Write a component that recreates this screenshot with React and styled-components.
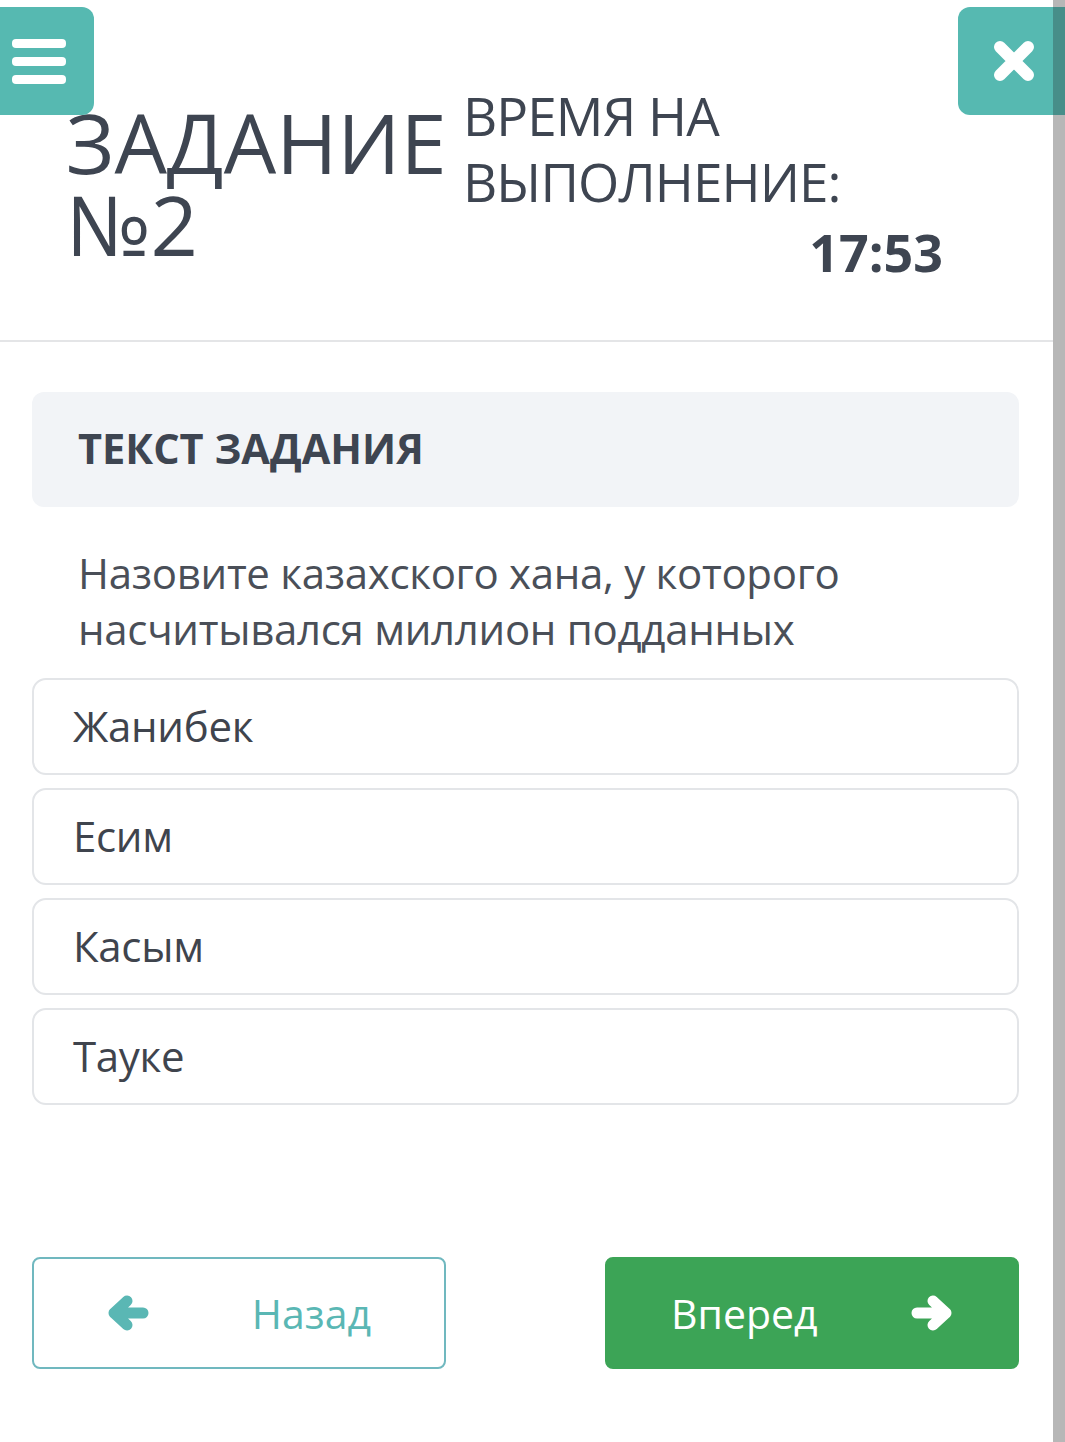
import React from "react";
import styled, { createGlobalStyle } from "styled-components";

const GlobalStyle = createGlobalStyle`
  html, body {
    margin: 0;
    padding: 0;
    background: #ffffff;
  }
  body {
    font-family: "Open Sans", "Liberation Sans", sans-serif;
    color: #3e4551;
  }
`;

const Page = styled.div`
  position: relative;
  display: flex;
  width: 1065px;
  min-height: 1442px;
  overflow: hidden;
`;

const Main = styled.main`
  flex: 1;
  display: flex;
  flex-direction: column;
`;

const Scrollbar = styled.div`
  width: 12px;
  background: #b7b7b7;
`;

const MenuButton = styled.button`
  position: absolute;
  left: 0;
  top: 7px;
  width: 94px;
  height: 108px;
  border: none;
  border-radius: 0 12px 12px 0;
  background: #56b9b1;
  display: flex;
  flex-direction: column;
  justify-content: center;
  gap: 9px;
  padding: 0 0 0 12px;
  cursor: pointer;
`;

const MenuBar = styled.span`
  display: block;
  width: 54px;
  height: 9px;
  border-radius: 4px;
  background: #ffffff;
`;

const CloseButton = styled.button`
  position: absolute;
  right: 0;
  top: 7px;
  width: 107px;
  height: 108px;
  border: none;
  border-radius: 12px 0 0 12px;
  background: #56b9b1;
  display: flex;
  align-items: center;
  padding: 0 0 0 34px;
  cursor: pointer;

  &::after {
    content: "";
    position: absolute;
    right: 0;
    top: 0;
    bottom: 0;
    width: 12px;
    background: #478e89;
  }
`;

const Header = styled.header`
  display: flex;
  align-items: flex-start;
  height: 342px;
  padding: 83px 0 0 66px;
  box-sizing: border-box;
  border-bottom: 2px solid #e4e5e7;
`;

const Title = styled.h1`
  margin: 18px 0 0;
  width: 397px;
  font-size: 83px;
  line-height: 82px;
  font-weight: 400;
  color: #3e4551;
`;

const TimeBlock = styled.div`
  width: 480px;
  display: flex;
  flex-direction: column;
`;

const TimeLabel = styled.div`
  font-size: 53px;
  line-height: 66px;
  font-weight: 400;
  color: #3e4551;
  letter-spacing: -0.9px;
`;

const Timer = styled.div`
  margin-top: 7px;
  align-self: flex-end;
  font-size: 52px;
  line-height: 60px;
  font-weight: 700;
  color: #3e4551;
`;

const Content = styled.section`
  display: flex;
  flex-direction: column;
  padding: 50px 34px 0 32px;
`;

const TaskHeading = styled.div`
  height: 115px;
  border-radius: 12px;
  background: #f2f4f7;
  display: flex;
  align-items: center;
  padding: 0 0 4px 46px;
  box-sizing: border-box;
  font-size: 41.5px;
  font-weight: 700;
  color: #3e4551;
`;

const Question = styled.p`
  margin: 38px 0 21px;
  padding-left: 46px;
  font-size: 42px;
  line-height: 56px;
  letter-spacing: -0.3px;
  color: #4a4f58;
`;

const Options = styled.div`
  display: flex;
  flex-direction: column;
  gap: 13px;
`;

const Option = styled.div`
  height: 97px;
  box-sizing: border-box;
  border: 2px solid #e3e5e8;
  border-radius: 14px;
  display: flex;
  align-items: center;
  padding: 0 0 2px 39px;
  font-size: 42px;
  letter-spacing: -0.3px;
  color: #3f444d;
  cursor: pointer;
`;

const Nav = styled.div`
  display: flex;
  justify-content: space-between;
  margin-top: 152px;
`;

const NavButton = styled.button`
  width: 414px;
  height: 112px;
  box-sizing: border-box;
  border-radius: 8px;
  border: 2px solid ${(p) => (p.$primary ? "#3ca456" : "#70b8bf")};
  background: ${(p) => (p.$primary ? "#3ca456" : "#ffffff")};
  color: ${(p) => (p.$primary ? "#ffffff" : "#5ab7b4")};
  display: flex;
  align-items: center;
  justify-content: space-between;
  padding: 0 ${(p) => (p.$primary ? "64px" : "73px")};
  font-family: "Open Sans", "Liberation Sans", sans-serif;
  font-size: 41px;
  cursor: pointer;
`;

const ArrowSvg = styled.svg`
  width: 42px;
  height: 36px;
  flex-shrink: 0;
  transform: ${(p) => (p.$right ? "scaleX(-1)" : "none")};
`;

// толстая стрелка как в font-awesome 4
const Arrow = ({ right }) => (
  <ArrowSvg $right={right} viewBox="0 0 42 36">
    <path
      d="M20 6 L7 18 L20 30 M7 18 L36 18"
      fill="none"
      stroke="currentColor"
      strokeWidth="11"
      strokeLinecap="round"
      strokeLinejoin="round"
    />
  </ArrowSvg>
);

const options = ["Жанибек", "Есим", "Касым", "Тауке"];

const App = () => {
  return (
    <Page>
      <GlobalStyle />
      <Main>
        <Header>
          <Title>
            ЗАДАНИЕ
            <br />
            №2
          </Title>
          <TimeBlock>
            <TimeLabel>
              ВРЕМЯ НА
              <br />
              ВЫПОЛНЕНИЕ:
            </TimeLabel>
            <Timer>17:53</Timer>
          </TimeBlock>
        </Header>

        <Content>
          <TaskHeading>ТЕКСТ ЗАДАНИЯ</TaskHeading>
          <Question>
            Назовите казахского хана, у которого насчитывался миллион подданных
          </Question>
          <Options>
            {options.map((o) => (
              <Option key={o}>{o}</Option>
            ))}
          </Options>
          <Nav>
            <NavButton>
              <Arrow />
              <span>Назад</span>
            </NavButton>
            <NavButton $primary>
              <span>Вперед</span>
              <Arrow right />
            </NavButton>
          </Nav>
        </Content>
      </Main>
      <Scrollbar />

      <MenuButton aria-label="menu">
        <MenuBar />
        <MenuBar />
        <MenuBar />
      </MenuButton>
      <CloseButton aria-label="close">
        <svg width="44" height="44" viewBox="0 0 44 44">
          <path
            d="M8 8 L36 36 M36 8 L8 36"
            stroke="#ffffff"
            strokeWidth="12"
            strokeLinecap="round"
          />
        </svg>
      </CloseButton>
    </Page>
  );
};

export default App;
